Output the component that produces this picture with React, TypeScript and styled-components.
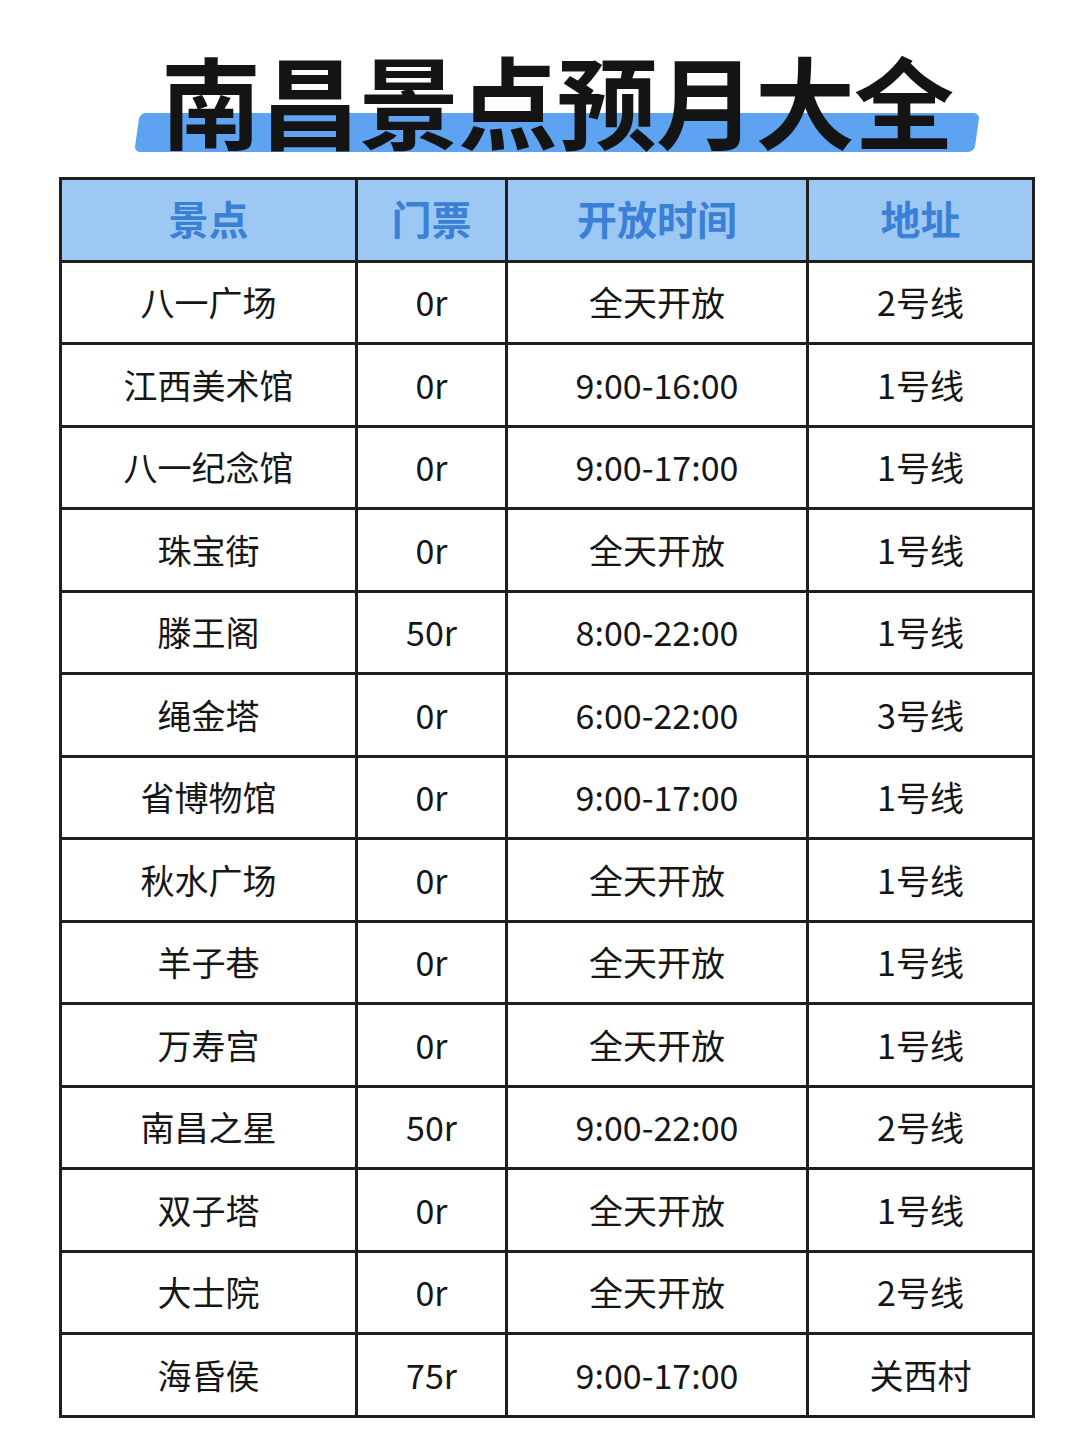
import React from "react";
import styled, { createGlobalStyle } from "styled-components";

const Global = createGlobalStyle`
  html, body { margin: 0; padding: 0; background: #ffffff; }
  body { font-family: "Noto Sans CJK SC", "Noto Sans", sans-serif; }
`;

const Page = styled.div`
  width: 1080px;
  height: 1443px;
  display: flex;
  flex-direction: column;
  align-items: center;
  box-sizing: border-box;
  padding-top: 39px;
  padding-left: 14px;
`;

const TitleWrap = styled.div`
  position: relative;
  width: 840px;
  height: 138px;
  margin-left: 20px;
  display: flex;
  justify-content: center;
  align-items: flex-start;
  &::before {
    content: "";
    position: absolute;
    left: 0;
    right: 0;
    top: 74px;
    height: 39px;
    background: #5ea3f1;
    border-radius: 6px;
    transform: skewX(-8deg);
  }
`;

const Title = styled.h1`
  position: relative;
  margin: 0;
  font-family: "Noto Sans CJK SC", sans-serif;
  font-weight: 700;
  font-size: 100px;
  line-height: 120px;
  color: #141414;
  letter-spacing: -1px;
`;

const Grid = styled.div`
  display: grid;
  grid-template-columns: 293px 147px 298px 223px;
  grid-auto-rows: 79.5px;
  gap: 3px;
  padding: 3px;
  background: #1f1f1f;
  width: 976px;
  box-sizing: border-box;
`;

const Cell = styled.div<{ $head?: boolean }>`
  display: flex;
  align-items: center;
  justify-content: center;
  background: ${(p) => (p.$head ? "#9dc8f4" : "#ffffff")};
  color: ${(p) => (p.$head ? "#3a80d6" : "#161616")};
  font-family: "Noto Sans CJK SC", sans-serif;
  font-weight: ${(p) => (p.$head ? 700 : 400)};
  font-size: ${(p) => (p.$head ? "40px" : "34px")};
  line-height: 1;
  padding-bottom: ${(p) => (p.$head ? "3px" : "0")};
`;

const head = ["景点", "门票", "开放时间", "地址"];
const rows: string[][] = [
  ["八一广场", "0r", "全天开放", "2号线"],
  ["江西美术馆", "0r", "9:00-16:00", "1号线"],
  ["八一纪念馆", "0r", "9:00-17:00", "1号线"],
  ["珠宝街", "0r", "全天开放", "1号线"],
  ["滕王阁", "50r", "8:00-22:00", "1号线"],
  ["绳金塔", "0r", "6:00-22:00", "3号线"],
  ["省博物馆", "0r", "9:00-17:00", "1号线"],
  ["秋水广场", "0r", "全天开放", "1号线"],
  ["羊子巷", "0r", "全天开放", "1号线"],
  ["万寿宫", "0r", "全天开放", "1号线"],
  ["南昌之星", "50r", "9:00-22:00", "2号线"],
  ["双子塔", "0r", "全天开放", "1号线"],
  ["大士院", "0r", "全天开放", "2号线"],
  ["海昏侯", "75r", "9:00-17:00", "关西村"],
];

export default function App() {
  return (
    <>
      <Global />
      <Page>
        <TitleWrap>
          <Title>南昌景点预月大全</Title>
        </TitleWrap>
        <Grid>
          {head.map((h) => (
            <Cell key={h} $head>
              {h}
            </Cell>
          ))}
          {rows.map((r, i) =>
            r.map((c, j) => <Cell key={`${i}-${j}`}>{c}</Cell>)
          )}
        </Grid>
      </Page>
    </>
  );
}
